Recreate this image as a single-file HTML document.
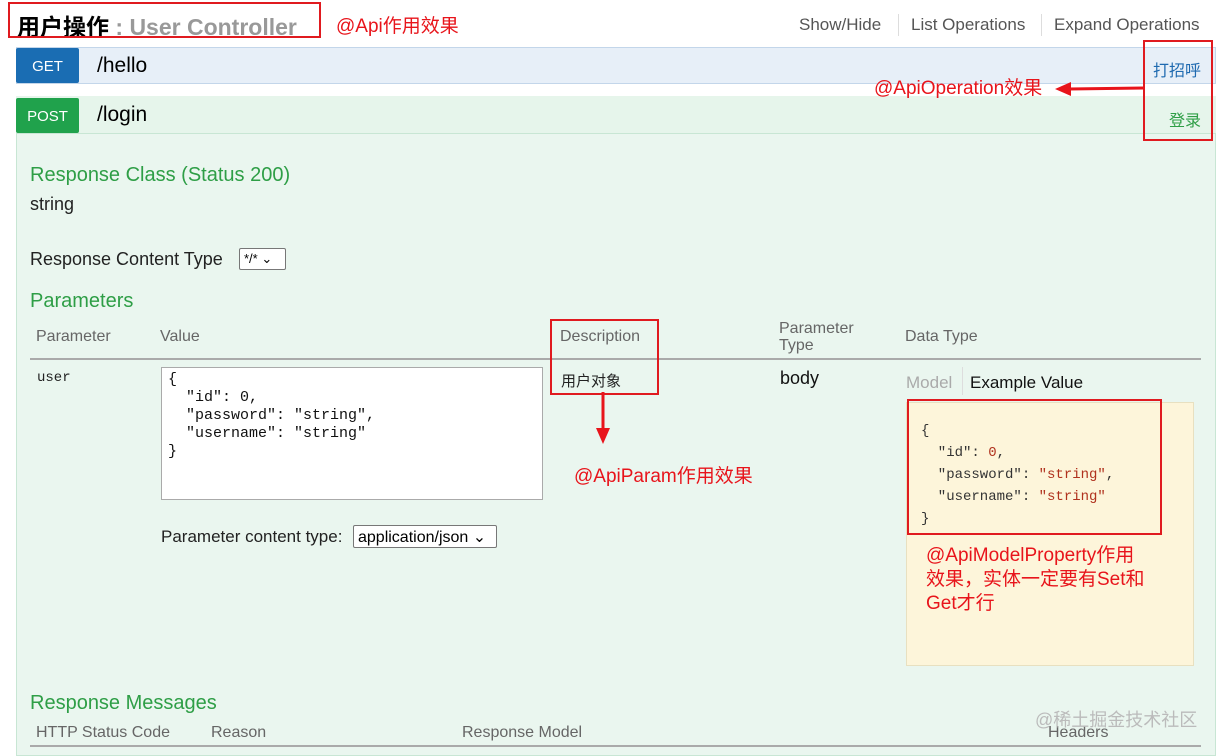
<!DOCTYPE html>
<html><head><meta charset="utf-8"><style>
*{margin:0;padding:0;box-sizing:border-box}
body{width:1217px;height:748px;overflow:hidden;background:#fff;font-family:"Liberation Sans","Noto Sans CJK SC",sans-serif;position:relative}
.a{position:absolute;white-space:nowrap}
.red{color:#e8141b}
.rb{position:absolute;border:2px solid #e01a1f}
.g{color:#2e9e46}
.h{color:#666;font-size:16px}
.mono{font-family:"Liberation Mono",monospace}
</style></head><body>
<div class="a" style="left:17px;top:8px;font-size:23px;font-weight:bold;color:#000">用户操作<span style="color:#999"> : User Controller</span></div>
<div class="rb" style="left:8px;top:2px;width:313px;height:36px"></div>
<div class="a red" style="left:336px;top:11px;font-size:19px">@Api作用效果</div>
<div class="a" style="left:799px;top:15px;font-size:17px;color:#555">Show/Hide</div>
<div class="a" style="left:898px;top:14px;width:1px;height:22px;background:#ddd"></div>
<div class="a" style="left:911px;top:15px;font-size:17px;color:#555">List Operations</div>
<div class="a" style="left:1041px;top:14px;width:1px;height:22px;background:#ddd"></div>
<div class="a" style="left:1054px;top:15px;font-size:17px;color:#555">Expand Operations</div>

<div class="a" style="left:16px;top:47px;width:1200px;height:37px;background:#e7eff8;border:1px solid #c3d6ea"></div>
<div class="a" style="left:16px;top:48px;width:63px;height:35px;background:#1a6db3;border-radius:2px;color:#fff;font-size:15px;text-align:center;line-height:38px">GET</div>
<div class="a" style="left:97px;top:54px;font-size:21px;color:#000">/hello</div>
<div class="a" style="left:1153px;top:57px;font-size:16px;color:#1f6ab0">打招呼</div>

<div class="a" style="left:16px;top:96px;width:1200px;height:660px;background:#eaf6ef;border:1px solid #c8e6d4"></div>
<div class="a" style="left:16px;top:96px;width:1200px;height:38px;background:#e6f5eb;border-bottom:1px solid #c8e6d4"></div>
<div class="a" style="left:16px;top:98px;width:63px;height:35px;background:#20a24c;border-radius:2px;color:#fff;font-size:15px;text-align:center;line-height:38px">POST</div>
<div class="a" style="left:97px;top:103px;font-size:21px;color:#000">/login</div>
<div class="a g" style="left:1169px;top:107px;font-size:16px">登录</div>
<div class="rb" style="left:1143px;top:40px;width:70px;height:101px"></div>
<div class="a red" style="left:874px;top:73px;font-size:19px">@ApiOperation效果</div>
<svg class="a" style="left:1055px;top:80px" width="92" height="18"><line x1="14" y1="9" x2="90" y2="8" stroke="#e8141b" stroke-width="3"/><polygon points="0,9 16,2 16,16" fill="#e8141b"/></svg>

<div class="a g" style="left:30px;top:164px;font-size:20px">Response Class (Status 200)</div>
<div class="a" style="left:30px;top:194px;font-size:18px;color:#222">string</div>
<div class="a" style="left:30px;top:249px;font-size:18px;color:#222">Response Content Type</div>
<div class="a" style="left:239px;top:248px;width:47px;height:22px;border:1px solid #777;background:#fff;font-size:13px;padding:2px 0 0 4px;border-radius:2px">*/* ⌄</div>
<div class="a g" style="left:30px;top:290px;font-size:20px">Parameters</div>
<div class="a h" style="left:36px;top:328px">Parameter</div>
<div class="a h" style="left:160px;top:328px">Value</div>
<div class="a h" style="left:560px;top:328px">Description</div>
<div class="a h" style="left:779px;top:320px;line-height:17px;white-space:normal;width:90px">Parameter Type</div>
<div class="a h" style="left:905px;top:328px">Data Type</div>
<div class="a" style="left:30px;top:358px;width:1171px;height:2px;background:#aaa"></div>
<div class="rb" style="left:550px;top:319px;width:109px;height:76px"></div>

<div class="a mono" style="left:37px;top:370px;font-size:14px;color:#222">user</div>
<div class="a mono" style="left:161px;top:367px;width:382px;height:133px;background:#fff;border:1px solid #aaa;font-size:15px;line-height:18px;padding:3px 6px;white-space:pre;color:#111">{
  "id": 0,
  "password": "string",
  "username": "string"
}</div>
<div class="a" style="left:161px;top:527px;font-size:17px;color:#222">Parameter content type:</div>
<div class="a" style="left:353px;top:525px;width:144px;height:23px;border:1px solid #777;background:#fff;font-size:16px;padding:1px 0 0 4px;border-radius:2px">application/json ⌄</div>

<div class="a" style="left:561px;top:370px;font-size:15px;color:#222">用户对象</div>
<svg class="a" style="left:594px;top:392px" width="18" height="54"><line x1="9" y1="0" x2="9" y2="38" stroke="#e8141b" stroke-width="3"/><polygon points="2,36 16,36 9,52" fill="#e8141b"/></svg>
<div class="a red" style="left:574px;top:461px;font-size:19px">@ApiParam作用效果</div>

<div class="a" style="left:780px;top:368px;font-size:18px;color:#111">body</div>
<div class="a" style="left:906px;top:373px;font-size:17px;color:#aaa">Model</div>
<div class="a" style="left:962px;top:367px;width:1px;height:28px;background:#ddd"></div>
<div class="a" style="left:970px;top:373px;font-size:17px;color:#111">Example Value</div>
<div class="a" style="left:906px;top:402px;width:288px;height:264px;background:#fdf5da;border:1px solid #e8e0c0"></div>
<div class="a mono" style="left:921px;top:420px;font-size:14px;line-height:22px;white-space:pre;color:#333">{
  "id": <span style="color:#b0321e">0</span>,
  "password": <span style="color:#b0321e">"string"</span>,
  "username": <span style="color:#b0321e">"string"</span>
}</div>
<div class="rb" style="left:907px;top:399px;width:255px;height:136px"></div>
<div class="a red" style="left:926px;top:544px;font-size:19px;line-height:24px">@ApiModelProperty作用<br>效果，实体一定要有Set和<br>Get才行</div>

<div class="a g" style="left:30px;top:692px;font-size:20px">Response Messages</div>
<div class="a h" style="left:36px;top:724px">HTTP Status Code</div>
<div class="a h" style="left:211px;top:724px">Reason</div>
<div class="a h" style="left:462px;top:724px">Response Model</div>
<div class="a h" style="left:1048px;top:724px">Headers</div>
<div class="a" style="left:1035px;top:706px;font-size:18px;color:#bbb">@稀土掘金技术社区</div>
<div class="a" style="left:30px;top:745px;width:1171px;height:2px;background:#aaa"></div>
</body></html>
